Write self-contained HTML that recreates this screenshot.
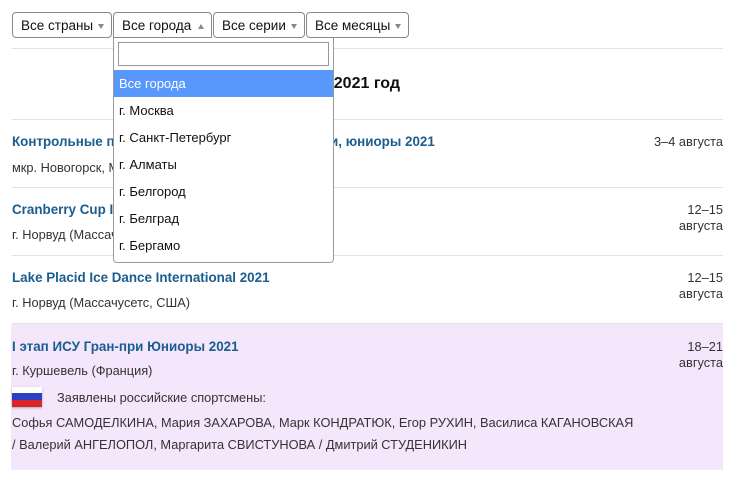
<!DOCTYPE html>
<html><head><meta charset="utf-8"><style>
body{margin:0;width:730px;height:480px;background:#fff;font-family:"Liberation Sans",Arial,sans-serif;color:#222;position:relative;overflow:hidden}
.a{position:absolute}
.btn{position:absolute;top:12px;height:26px;border:1px solid #8a8a8a;border-radius:4px;background:#fff;font-size:13.5px;line-height:26px;box-sizing:border-box;padding-left:8px;color:#111}
.btn i{position:absolute;right:7px;top:11px;width:0;height:0;border-left:3.5px solid transparent;border-right:3.5px solid transparent;border-top:5px solid #888}
.btn i.up{border-top:0;border-bottom:5px solid #888}
.hr{position:absolute;left:12px;width:711px;height:1px;background:#e2e2e2}
.t{position:absolute;left:12px;font-size:13.4px;font-weight:bold;color:#1a5d8f;white-space:nowrap}
.s{position:absolute;left:12px;font-size:12.8px;color:#333;white-space:nowrap}
.d{position:absolute;right:7px;font-size:12.8px;color:#333;text-align:right;line-height:16px}
.dd{position:absolute;left:113px;top:38px;width:221px;height:225px;background:#fff;border:1px solid #999;border-top:none;border-radius:0 0 4px 4px;box-sizing:border-box}
.dd .it{position:absolute;left:0;width:219px;height:27px;line-height:27px;padding-left:5px;font-size:13px;box-sizing:border-box;color:#111}
</style></head><body>
<div class="btn" style="left:12px;width:100px">Все страны<i></i></div>
<div class="btn" style="left:113px;width:99px;border-bottom-left-radius:0;border-bottom-right-radius:0">Все города<i class="up"></i></div>
<div class="btn" style="left:213px;width:92px">Все серии<i></i></div>
<div class="btn" style="left:306px;width:103px">Все месяцы<i></i></div>
<div class="hr" style="top:48px"></div>
<div class="a" style="left:130px;width:270px;top:75px;overflow:hidden;text-align:right"><span style="font-size:16px;font-weight:bold;color:#111;white-space:nowrap">Календарь 2021 год</span></div>
<div class="hr" style="top:119px"></div>
<div class="t" style="top:134px">Контрольные прокаты сборной команды России, юниоры 2021</div>
<div class="s" style="top:160px">мкр. Новогорск, Московская обл.</div>
<div class="d" style="top:134px">3–4 августа</div>
<div class="hr" style="top:187px"></div>
<div class="t" style="top:202px">Cranberry Cup International 2021</div>
<div class="s" style="top:227px">г. Норвуд (Массачусетс, США)</div>
<div class="d" style="top:202px">12–15<br>августа</div>
<div class="hr" style="top:255px"></div>
<div class="t" style="top:270px">Lake Placid Ice Dance International 2021</div>
<div class="s" style="top:295px">г. Норвуд (Массачусетс, США)</div>
<div class="d" style="top:270px">12–15<br>августа</div>
<div class="hr" style="top:323px"></div>
<div class="a" style="left:11px;top:324px;width:712px;height:146px;background:#f4e6fb"></div>
<div class="t" style="top:339px">I этап ИСУ Гран-при Юниоры 2021</div>
<div class="s" style="top:363px">г. Куршевель (Франция)</div>
<div class="d" style="top:339px">18–21<br>августа</div>
<div class="a" style="left:12px;top:387px;width:30px;height:20px;box-shadow:0 1px 2px #aaa"><div style="height:6px;background:#fff"></div><div style="height:7px;background:#2b3fc4"></div><div style="height:7px;background:#d8262b"></div></div>
<div class="s" style="left:57px;top:390px">Заявлены российские спортсмены:</div>
<div class="s" style="top:415px">Софья САМОДЕЛКИНА, Мария ЗАХАРОВА, Марк КОНДРАТЮК, Егор РУХИН, Василиса КАГАНОВСКАЯ</div>
<div class="s" style="top:437px">/ Валерий АНГЕЛОПОЛ, Маргарита СВИСТУНОВА / Дмитрий СТУДЕНИКИН</div>
<div class="dd">
<div class="a" style="left:4px;top:4px;width:211px;height:24px;border:1px solid #999;box-sizing:border-box"></div>
<div class="it" style="top:32px;background:#5897fb;color:#fff">Все города</div>
<div class="it" style="top:59px">г. Москва</div>
<div class="it" style="top:86px">г. Санкт-Петербург</div>
<div class="it" style="top:113px">г. Алматы</div>
<div class="it" style="top:140px">г. Белгород</div>
<div class="it" style="top:167px">г. Белград</div>
<div class="it" style="top:194px">г. Бергамо</div>
</div>
</body></html>
